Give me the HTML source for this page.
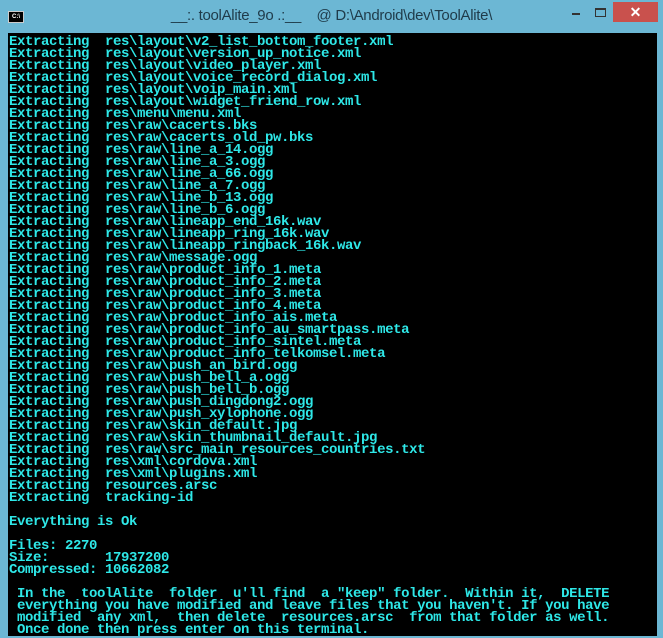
<!DOCTYPE html>
<html><head><style>
body{margin:0;width:663px;height:636px;background:#6cb7d4;position:relative;overflow:hidden}
.t{position:absolute;top:7px;left:0;width:663px;text-align:center;font:15px "Liberation Sans",sans-serif;color:#1f3b4a;letter-spacing:-0.3px}
.ic{position:absolute;left:8px;top:11px;width:14px;height:10px;background:#000;border:1px solid #ccc;color:#fff;font:bold 6px "Liberation Sans";line-height:10px;text-align:center}
.x{position:absolute;left:613px;top:2px;width:45px;height:20px;background:#c9514d;color:#fff;font:bold 14px "Liberation Sans";text-align:center;line-height:20px}
.min{position:absolute;left:572px;top:13px;width:8px;height:2px;background:#333}
.max{position:absolute;left:595px;top:8px;width:9px;height:6px;border:1px solid #333;border-top-width:2px}
.c{position:absolute;left:8px;top:33px;width:649px;height:603px;background:#000}
pre{margin:0;position:absolute;left:9px;top:36px;font:bold 14px/12px "Liberation Mono",monospace;letter-spacing:-0.4px;color:#2ee8e8;white-space:pre}
</style></head><body>
<div class="ic">C:\</div>
<div class="t">__:. toolAlite_9o .:__&nbsp;&nbsp;&nbsp; @ D:\Android\dev\ToolAlite\</div>
<div class="min"></div><div class="max"></div><div class="x">✕</div>
<div class="c"></div>
<pre>Extracting  res\layout\v2_list_bottom_footer.xml
Extracting  res\layout\version_up_notice.xml
Extracting  res\layout\video_player.xml
Extracting  res\layout\voice_record_dialog.xml
Extracting  res\layout\voip_main.xml
Extracting  res\layout\widget_friend_row.xml
Extracting  res\menu\menu.xml
Extracting  res\raw\cacerts.bks
Extracting  res\raw\cacerts_old_pw.bks
Extracting  res\raw\line_a_14.ogg
Extracting  res\raw\line_a_3.ogg
Extracting  res\raw\line_a_66.ogg
Extracting  res\raw\line_a_7.ogg
Extracting  res\raw\line_b_13.ogg
Extracting  res\raw\line_b_6.ogg
Extracting  res\raw\lineapp_end_16k.wav
Extracting  res\raw\lineapp_ring_16k.wav
Extracting  res\raw\lineapp_ringback_16k.wav
Extracting  res\raw\message.ogg
Extracting  res\raw\product_info_1.meta
Extracting  res\raw\product_info_2.meta
Extracting  res\raw\product_info_3.meta
Extracting  res\raw\product_info_4.meta
Extracting  res\raw\product_info_ais.meta
Extracting  res\raw\product_info_au_smartpass.meta
Extracting  res\raw\product_info_sintel.meta
Extracting  res\raw\product_info_telkomsel.meta
Extracting  res\raw\push_an_bird.ogg
Extracting  res\raw\push_bell_a.ogg
Extracting  res\raw\push_bell_b.ogg
Extracting  res\raw\push_dingdong2.ogg
Extracting  res\raw\push_xylophone.ogg
Extracting  res\raw\skin_default.jpg
Extracting  res\raw\skin_thumbnail_default.jpg
Extracting  res\raw\src_main_resources_countries.txt
Extracting  res\xml\cordova.xml
Extracting  res\xml\plugins.xml
Extracting  resources.arsc
Extracting  tracking-id

Everything is Ok

Files: 2270
Size:       17937200
Compressed: 10662082

 In the  toolAlite  folder  u'll find  a "keep" folder.  Within it,  DELETE
 everything you have modified and leave files that you haven't. If you have
 modified  any xml,  then delete  resources.arsc  from that folder as well.
 Once done then press enter on this terminal.</pre>
</body></html>
